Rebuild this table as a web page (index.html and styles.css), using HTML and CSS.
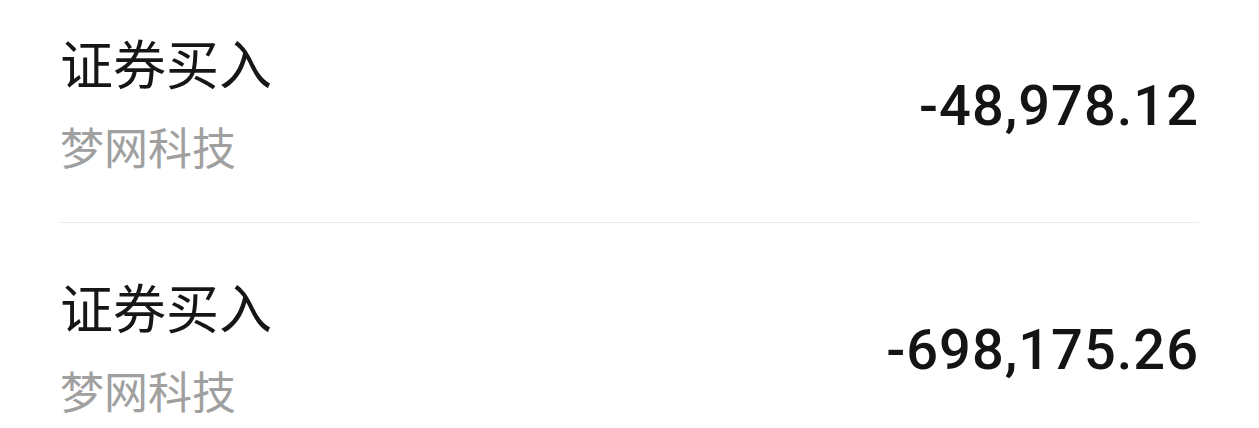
FILE: index.html
```html
<!DOCTYPE html>
<html lang="zh-CN">
  <head>
    <meta charset="utf-8">
    <link rel="stylesheet" href="styles.css">
    <title>交易记录</title>
  </head>
  <body>
    <div class="records">
      <div class="record">
        <div class="record-info">
          <div class="record-title">证券买入</div>
          <div class="record-sub">梦网科技</div>
        </div>
        <div class="record-amount">-48,978.12</div>
      </div>
      <div class="record">
        <div class="record-info">
          <div class="record-title">证券买入</div>
          <div class="record-sub">梦网科技</div>
        </div>
        <div class="record-amount">-698,175.26</div>
      </div>
    </div>
  </body>
</html>
```

FILE: styles.css
```css
html, body{
  height: 100%;
  overflow: hidden;
}
body{
  margin: 0;
  background-color: #ffffff;
  font-family: "Noto Sans CJK SC", "Noto Sans", sans-serif;
}
.records{
  margin-top: -21px; /* list is scrolled a little */
  padding: 0 60px;
}
.record{
  display: flex;
  justify-content: space-between;
  align-items: center;
  padding: 53px 0 51px;
  border-bottom: 1px solid #ebebeb;
}
.record-info{
  display: flex;
  flex-direction: column;
}
.record-title{
  font-size: 53px;
  line-height: 60px;
  color: #161616;
}
.record-sub{
  margin-top: 29px;
  font-size: 44px;
  line-height: 50px;
  color: #a0a0a0;
}
.record-amount{
  margin-top: 8px;
  font-family: Roboto, "Liberation Sans", sans-serif;
  font-weight: 500;
  font-size: 56px;
  line-height: 56px;
  letter-spacing: 1px;
  color: #141414;
}
```
